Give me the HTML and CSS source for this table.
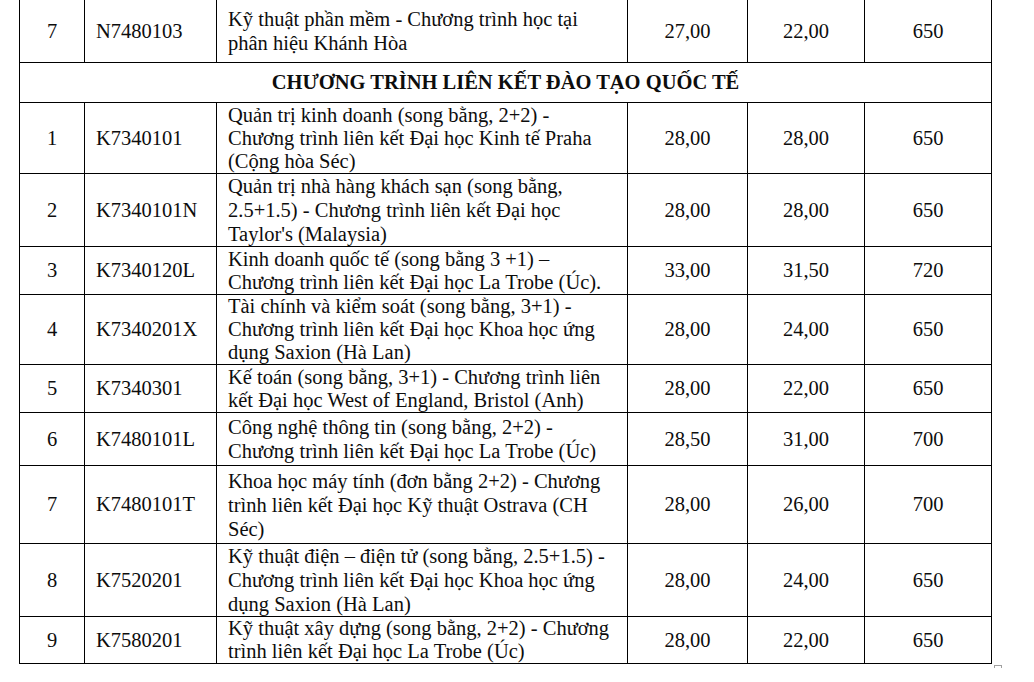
FILE: index.html
```html
<!DOCTYPE html>
<html lang="vi">
<head>
<meta charset="utf-8">
<title>Chương trình liên kết đào tạo quốc tế</title>
<link rel="stylesheet" href="styles.css">
</head>
<body>
<div class="page">
  <div class="wrap">
    <table class="grid">
      <colgroup>
        <col class="c-stt"><col class="c-code"><col class="c-name"><col class="c-a"><col class="c-b"><col class="c-c">
      </colgroup>
      <tbody>
        <tr class="r-first">
          <td class="num">7</td><td class="code">N7480103</td>
          <td class="name">Kỹ thuật phần mềm - Chương trình học tại<br>phân hiệu Khánh Hòa</td>
          <td class="num">27,00</td><td class="num">22,00</td><td class="num">650</td>
        </tr>
        <tr class="r-head">
          <td class="head" colspan="6">CHƯƠNG TRÌNH LIÊN KẾT ĐÀO TẠO QUỐC TẾ</td>
        </tr>
        <tr class="r3">
          <td class="num">1</td><td class="code">K7340101</td>
          <td class="name">Quản trị kinh doanh (song bằng, 2+2) -<br>Chương trình liên kết Đại học Kinh tế Praha<br>(Cộng hòa Séc)</td>
          <td class="num">28,00</td><td class="num">28,00</td><td class="num">650</td>
        </tr>
        <tr class="r3-loose">
          <td class="num">2</td><td class="code">K7340101N</td>
          <td class="name">Quản trị nhà hàng khách sạn (song bằng,<br>2.5+1.5) - Chương trình liên kết Đại học<br>Taylor's (Malaysia)</td>
          <td class="num">28,00</td><td class="num">28,00</td><td class="num">650</td>
        </tr>
        <tr class="r2">
          <td class="num">3</td><td class="code">K7340120L</td>
          <td class="name">Kinh doanh quốc tế (song bằng 3 +1) –<br>Chương trình liên kết Đại học La Trobe (Úc).</td>
          <td class="num">33,00</td><td class="num">31,50</td><td class="num">720</td>
        </tr>
        <tr class="r3-tight">
          <td class="num">4</td><td class="code">K7340201X</td>
          <td class="name">Tài chính và kiểm soát (song bằng, 3+1) -<br>Chương trình liên kết Đại học Khoa học ứng<br>dụng Saxion (Hà Lan)</td>
          <td class="num">28,00</td><td class="num">24,00</td><td class="num">650</td>
        </tr>
        <tr class="r2">
          <td class="num">5</td><td class="code">K7340301</td>
          <td class="name">Kế toán (song bằng, 3+1) - Chương trình liên<br>kết Đại học West of England, Bristol (Anh)</td>
          <td class="num">28,00</td><td class="num">22,00</td><td class="num">650</td>
        </tr>
        <tr class="r2-tall">
          <td class="num">6</td><td class="code">K7480101L</td>
          <td class="name">Công nghệ thông tin (song bằng, 2+2) -<br>Chương trình liên kết Đại học La Trobe (Úc)</td>
          <td class="num">28,50</td><td class="num">31,00</td><td class="num">700</td>
        </tr>
        <tr class="r3-tall">
          <td class="num">7</td><td class="code">K7480101T</td>
          <td class="name">Khoa học máy tính (đơn bằng 2+2) - Chương<br>trình liên kết Đại học Kỹ thuật Ostrava (CH<br>Séc)</td>
          <td class="num">28,00</td><td class="num">26,00</td><td class="num">700</td>
        </tr>
        <tr class="r3-loose">
          <td class="num">8</td><td class="code">K7520201</td>
          <td class="name">Kỹ thuật điện – điện tử (song bằng, 2.5+1.5) -<br>Chương trình liên kết Đại học Khoa học ứng<br>dụng Saxion (Hà Lan)</td>
          <td class="num">28,00</td><td class="num">24,00</td><td class="num">650</td>
        </tr>
        <tr class="r2-last">
          <td class="num">9</td><td class="code">K7580201</td>
          <td class="name">Kỹ thuật xây dựng (song bằng, 2+2) - Chương<br>trình liên kết Đại học La Trobe (Úc)</td>
          <td class="num">28,00</td><td class="num">22,00</td><td class="num">650</td>
        </tr>
      </tbody>
    </table>
    <span class="handle"></span>
  </div>
</div>
</body>
</html>
```
FILE: styles.css
```css
html, body {
  margin: 0;
  padding: 0;
  background: #ffffff;
}
.page {
  padding-left: 19px;
  margin-top: -1px;
}
.wrap {
  position: relative;
  display: inline-block;
}
.grid {
  border-collapse: collapse;
  table-layout: fixed;
  width: 972px;
  font-family: "Liberation Serif", "Times New Roman", serif;
  font-size: 20.5px;
  line-height: 23px;
  color: #0d0d0d;
}
.c-stt { width: 65px; }
.c-code { width: 132px; }
.c-name { width: 411px; }
.c-a { width: 120px; }
.c-b { width: 117px; }
.c-c { width: 127px; }
.grid td {
  border: 1px solid #000;
  padding: 0;
  vertical-align: middle;
}
.num { text-align: center; }
.grid .code { padding-left: 11px; }
.grid .name { padding-left: 11px; padding-right: 2px; white-space: nowrap; line-height: 23px; }
.grid .r3-loose .name, .grid .r3-tall .name, .grid .r2-tall .name, .grid .r-first .name { line-height: 24px; }
.head {
  text-align: center;
  font-weight: bold;
}
.r-first { height: 63px; }
.r-head { height: 40px; }
.r3 { height: 71px; }
.r3-loose { height: 73px; }
.r3-tight { height: 70px; }
.r2 { height: 48px; }
.r2-last { height: 47px; }
.r2-tall { height: 53px; }
.r3-tall { height: 78px; }
.handle {
  position: absolute;
  right: -10px;
  bottom: -9px;
  width: 6px;
  height: 6px;
  border: 1px solid #a0a0a0;
  background: #fff;
}
```
